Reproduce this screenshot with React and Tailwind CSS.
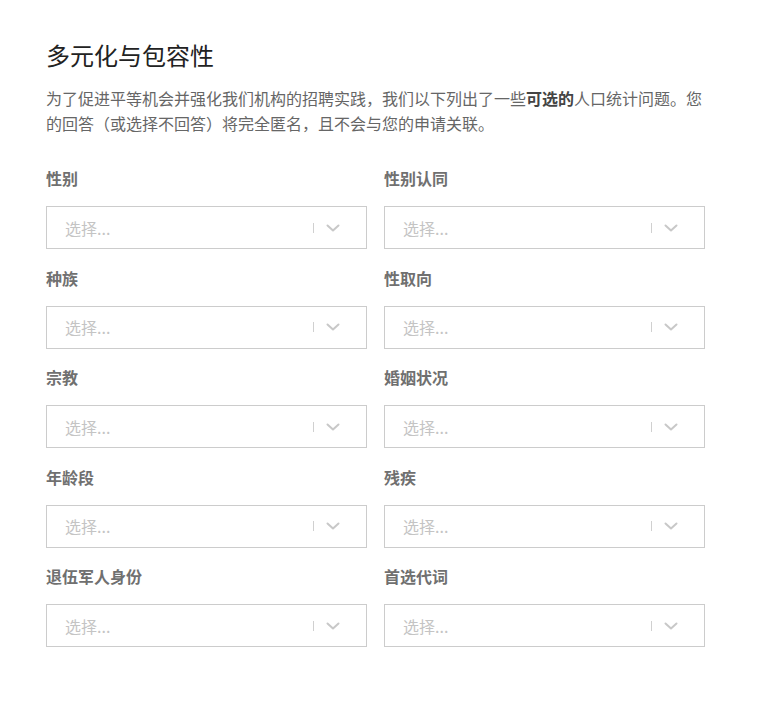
import React from 'react'

const fields = [
    '性别', '性别认同',
    '种族', '性取向',
    '宗教', '婚姻状况',
    '年龄段', '残疾',
    '退伍军人身份', '首选代词',
]

function SelectBox() {
    return (
        <div className="h-[43px] border border-[#cccccc] bg-white flex items-center pl-[18px] pr-[26px]">
            <span className="flex-1 text-[16px] text-[#c4c4c4]">选择...</span>
            <span className="w-px h-[10px] bg-[#d0d0d0] mr-[12px]" />
            <svg width="14" height="8" viewBox="0 0 14 8" fill="none" stroke="#c8c8c8" strokeWidth="2" strokeLinecap="round" strokeLinejoin="round">
                <path d="M1.5 1.5 L7 6.5 L12.5 1.5" />
            </svg>
        </div>
    )
}

export default function App() {
    return (
        <div className="min-h-screen bg-white" style={{ fontFamily: '"Noto Sans CJK SC", "Noto Sans", sans-serif' }}>
            <div className="w-[659px] ml-[46px] pt-[38px]">
                <h1 className="text-[24px] leading-[34px] text-[#222222] font-normal mb-[14px]">多元化与包容性</h1>
                <p className="text-[16px] leading-[25px] text-[#666666] mb-[25px]">
                    为了促进平等机会并强化我们机构的招聘实践，我们以下列出了一些<strong className="font-bold text-[#444444]">可选的</strong>人口统计问题。您的回答（或选择不回答）将完全匿名，且不会与您的申请关联。
                </p>
                <div className="grid grid-cols-2 gap-x-[17px]">
                    {fields.map((label) => (
                        <div key={label} className="h-[99.5px]">
                            <div className="h-[34px] flex items-center text-[16px] font-bold text-[#707070]">{label}</div>
                            <div className="mt-[11px]">
                                <SelectBox />
                            </div>
                        </div>
                    ))}
                </div>
            </div>
        </div>
    )
}
